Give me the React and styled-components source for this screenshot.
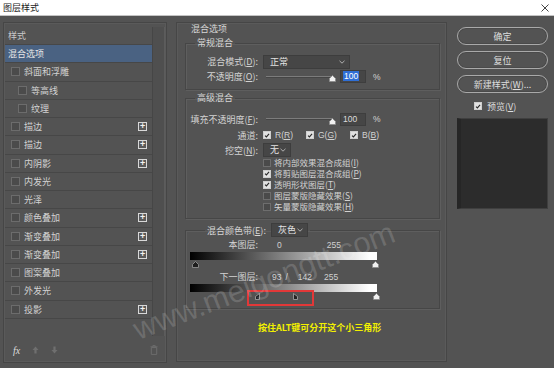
import React from "react";
import styled, { createGlobalStyle } from "styled-components";

const GlobalStyle = createGlobalStyle`
  html, body {
    margin: 0;
    padding: 0;
    background: #535353;
  }
  body {
    width: 554px;
    height: 368px;
    overflow: hidden;
    font-family: "Noto Sans CJK SC", "Liberation Sans", sans-serif;
  }
  u {
    text-decoration-thickness: 1px;
    text-underline-offset: 1px;
  }
`;

const leftItems = [
  { label: "斜面和浮雕" },
  { label: "等高线", sub: true },
  { label: "纹理", sub: true },
  { label: "描边", plus: true },
  { label: "描边", plus: true },
  { label: "内阴影", plus: true },
  { label: "内发光" },
  { label: "光泽" },
  { label: "颜色叠加", plus: true },
  { label: "渐变叠加", plus: true },
  { label: "渐变叠加", plus: true },
  { label: "图案叠加" },
  { label: "外发光" },
  { label: "投影", plus: true },
];

const checkList = [
  { label: "将内部效果混合成组", key: "I", on: false },
  { label: "将剪贴图层混合成组", key: "P", on: true },
  { label: "透明形状图层", key: "T", on: true },
  { label: "图层蒙版隐藏效果", key: "S", on: false },
  { label: "矢量蒙版隐藏效果", key: "H", on: false },
];

const Chevron = () => (
  <svg width="6" height="4" viewBox="0 0 6 4">
    <path d="M0.5 0.8 L3 3.2 L5.5 0.8" fill="none" stroke="#bbb" strokeWidth="0.9" />
  </svg>
);

const Thumb = ({ dark }) => (
  <svg width="7" height="7" viewBox="0 0 7 7">
    <path
      d="M3.5 0.5 L6.5 3.5 L6.5 6.5 L0.5 6.5 L0.5 3.5 Z"
      fill={dark ? "#1e1e1e" : "#f0f0f0"}
      stroke={dark ? "#9a9a9a" : "#8a8a8a"}
      strokeWidth="0.8"
    />
  </svg>
);

const HalfThumb = ({ flip }) => (
  <svg width="5" height="7" viewBox="0 0 5 7">
    <path
      d={flip ? "M0.5 0.5 L4.5 3.5 L4.5 6.5 L0.5 6.5 Z" : "M4.5 0.5 L0.5 3.5 L0.5 6.5 L4.5 6.5 Z"}
      fill="#222"
      stroke="#a8a8a8"
      strokeWidth="0.8"
    />
  </svg>
);

const Box = ({ on }) => (
  <CheckBox $on={on}>
    {on && (
      <svg width="7" height="7" viewBox="0 0 7 7">
        <path d="M1.2 3.6 L2.8 5.2 L5.9 1.6" fill="none" stroke="#2a2a2a" strokeWidth="1.3" />
      </svg>
    )}
  </CheckBox>
);

const Slider = () => (
  <SliderWrap>
    <Track />
    <Thumb />
  </SliderWrap>
);

export default function App() {
  return (
    <>
      <GlobalStyle />
      <Window>
        <TitleBar>
          <span>图层样式</span>
          <svg width="8" height="8" viewBox="0 0 8 8">
            <path d="M0.5 0.5 L7.5 7.5 M7.5 0.5 L0.5 7.5" stroke="#444" strokeWidth="1" />
          </svg>
        </TitleBar>
        <Body>
          <LeftPanel>
            <ListArea>
              <List>
                <ListHeader>样式</ListHeader>
                <ListItem $selected>混合选项</ListItem>
                {leftItems.map((item, index) => (
                  <ListItem key={`${index}leftItem`} $sub={item.sub}>
                    <ListCheck />
                    <ItemText>{item.label}</ItemText>
                    {item.plus && <PlusBox>+</PlusBox>}
                  </ListItem>
                ))}
              </List>
              <ScrollTrack />
            </ListArea>
            <Footer>
              <Fx>fx</Fx>
              <svg width="7" height="8" viewBox="0 0 7 8">
                <path d="M3.5 0.5 L6.5 4 L4.6 4 L4.6 7.5 L2.4 7.5 L2.4 4 L0.5 4 Z" fill="#6f6f6f" />
              </svg>
              <svg width="7" height="8" viewBox="0 0 7 8">
                <path d="M3.5 7.5 L6.5 4 L4.6 4 L4.6 0.5 L2.4 0.5 L2.4 4 L0.5 4 Z" fill="#6f6f6f" />
              </svg>
              <FooterSpacer />
              <svg width="8" height="10" viewBox="0 0 8 10">
                <path d="M0.5 1.8 H7.5 M2.8 1.8 V0.6 H5.2 V1.8 M1.3 2.6 H6.7 V9.4 H1.3 Z" fill="none" stroke="#6f6f6f" strokeWidth="0.9" />
              </svg>
            </Footer>
          </LeftPanel>

          <MidPanel>
            <PanelTitle>混合选项</PanelTitle>
            <Group $pt={5} $pb={5}>
              <Legend>常规混合</Legend>
              <FieldRow $h={15}>
                <Label>混合模式(<u>D</u>):</Label>
                <Select $w={87}>
                  <span>正常</span>
                  <Chevron />
                </Select>
              </FieldRow>
              <FieldRow $h={15}>
                <Label>不透明度(<u>O</u>):</Label>
                <Slider />
                <NumBox>
                  <Picked>100</Picked>
                </NumBox>
                <Pct>%</Pct>
              </FieldRow>
            </Group>

            <Group $pt={7} $pb={6} $mt={2}>
              <Legend>高级混合</Legend>
              <FieldRow $h={16}>
                <Label>填充不透明度(<u>F</u>):</Label>
                <Slider />
                <NumBox>100</NumBox>
                <Pct>%</Pct>
              </FieldRow>
              <FieldRow $h={16}>
                <Label>通道:</Label>
                <Channel $w={43}>
                  <Box on />
                  <span>R(<u>R</u>)</span>
                </Channel>
                <Channel $w={44}>
                  <Box on />
                  <span>G(<u>G</u>)</span>
                </Channel>
                <Channel>
                  <Box on />
                  <span>B(<u>B</u>)</span>
                </Channel>
              </FieldRow>
              <FieldRow $h={14}>
                <Label>挖空(<u>N</u>):</Label>
                <Select $w={28}>
                  <span>无</span>
                  <Chevron />
                </Select>
              </FieldRow>
              <CheckColumn>
                {checkList.map(item => (
                  <CheckLine key={item.key}>
                    <Box on={item.on} />
                    <span>
                      {item.label}(<u>{item.key}</u>)
                    </span>
                  </CheckLine>
                ))}
              </CheckColumn>
            </Group>

            <Group $pt={2} $pb={8} $mt={4} $pl={4}>
              <BandLegend>
                <span>混合颜色带(<u>E</u>):</span>
                <Select $w={37}>
                  <span>灰色</span>
                  <Chevron />
                </Select>
              </BandLegend>
              <LevelRow>
                <LevelLabel>本图层:</LevelLabel>
                <Num $ml={19}>0</Num>
                <Num $ml={45}>255</Num>
              </LevelRow>
              <GradientBar />
              <MarkerRow>
                <Marker $ml={2}>
                  <Thumb dark />
                </Marker>
                <Marker $ml={173}>
                  <Thumb />
                </Marker>
              </MarkerRow>
              <LevelRow $mt={3}>
                <LevelLabel>下一图层:</LevelLabel>
                <Num $ml={14}>93</Num>
                <Num $ml={4}>/</Num>
                <Num $ml={10}>142</Num>
                <Num $ml={12}>255</Num>
              </LevelRow>
              <GradientBar />
              <MarkerRow>
                <Marker $ml={65}>
                  <HalfThumb />
                </Marker>
                <Marker $ml={33}>
                  <HalfThumb flip />
                </Marker>
                <Marker $ml={75}>
                  <Thumb />
                </Marker>
                <RedFrame />
              </MarkerRow>
            </Group>

            <Hint>按住ALT键可分开这个小三角形</Hint>
          </MidPanel>

          <RightCol>
            <PillButton>确定</PillButton>
            <PillButton>复位</PillButton>
            <PillButton>
              新建样式(<u>W</u>)...
            </PillButton>
            <PreviewRow>
              <Box on />
              <span>
                预览(<u>V</u>)
              </span>
            </PreviewRow>
            <Swatch />
          </RightCol>
        </Body>
        <Watermark>www.meigongtt.com</Watermark>
      </Window>
    </>
  );
}

const Window = styled.div`
  position: relative;
  width: 554px;
  height: 368px;
  background: #535353;
  overflow: hidden;
  color: #d2d2d2;
  font-size: 9px;
`;

const TitleBar = styled.div`
  height: 15px;
  background: #ffffff;
  border-bottom: 1px solid #c4c4c4;
  display: flex;
  align-items: center;
  justify-content: space-between;
  padding: 0 5px 0 3px;
  color: #1a1a1a;
  font-size: 9px;
  line-height: 15px;
`;

const Body = styled.div`
  display: flex;
  align-items: flex-start;
  padding: 6px 0 0 3px;
`;

const LeftPanel = styled.div`
  width: 164px;
  height: 341px;
  box-sizing: border-box;
  border: 1px solid #464646;
  box-shadow: inset 0 0 0 1px #5a5a5a;
  padding: 4px 1px 0 1px;
  display: flex;
  flex-direction: column;
`;

const ListArea = styled.div`
  flex: 1;
  display: flex;
`;

const List = styled.div`
  width: 148px;
  display: flex;
  flex-direction: column;
`;

const ScrollTrack = styled.div`
  width: 11px;
  margin-bottom: 4px;
  background: #4f4f4f;
  border-left: 1px solid #464646;
  border-right: 1px solid #5c5c5c;
`;

const ListHeader = styled.div`
  height: 18px;
  box-sizing: border-box;
  padding-left: 3px;
  line-height: 17px;
  color: #c8c8c8;
  border-bottom: 1px solid #474747;
`;

const ListItem = styled.div`
  height: 18.25px;
  box-sizing: border-box;
  display: flex;
  align-items: center;
  padding-left: ${({ $sub, $selected }) => ($selected ? 3 : $sub ? 13 : 6)}px;
  padding-right: 5px;
  background: ${({ $selected }) => ($selected ? "#4a6282" : "#535353")};
  border-bottom: 1px solid #474747;
  color: ${({ $selected }) => ($selected ? "#e6e6e6" : "#d2d2d2")};
`;

const ListCheck = styled.span`
  width: 7px;
  height: 7px;
  border: 1px solid #6c6c6c;
  background: #4b4b4b;
  flex-shrink: 0;
`;

const ItemText = styled.span`
  margin-left: 4px;
  flex: 1;
`;

const PlusBox = styled.span`
  width: 7px;
  height: 7px;
  border: 1px solid #d8d8d8;
  background: #5a5a5a;
  color: #f2f2f2;
  font-family: "Liberation Sans", sans-serif;
  font-size: 9px;
  font-weight: 700;
  line-height: 7px;
  text-align: center;
`;

const Footer = styled.div`
  height: 20px;
  display: flex;
  align-items: center;
  gap: 12px;
  padding: 0 7px 2px 8px;
`;

const Fx = styled.span`
  font-family: "Liberation Serif", serif;
  font-style: italic;
  font-size: 10px;
  color: #dcdcdc;
`;

const FooterSpacer = styled.span`
  flex: 1;
`;

const MidPanel = styled.div`
  width: 271px;
  height: 340px;
  margin-left: 9px;
  box-sizing: border-box;
  border: 1px solid #464646;
  box-shadow: inset 0 0 0 1px #5a5a5a;
  padding: 0 6px 0 8px;
`;

const PanelTitle = styled.div`
  height: 10px;
  line-height: 10px;
  margin-top: 1px;
  padding-left: 6px;
  color: #d6d6d6;
`;

const Group = styled.fieldset`
  margin: ${({ $mt }) => $mt ?? 3}px 0 0;
  padding: ${({ $pt }) => $pt}px 0 ${({ $pb }) => $pb}px ${({ $pl }) => $pl ?? 0}px;
  border: 1px solid #464646;
  box-shadow: 1px 1px 0 #5e5e5e, inset 1px 1px 0 #5e5e5e;
  min-width: 0;
`;

const Legend = styled.legend`
  margin-left: 9px;
  padding: 0 2px;
  height: 12px;
  line-height: 12px;
  color: #d6d6d6;
`;

const BandLegend = styled.legend`
  margin-left: 15px;
  padding: 0 2px;
  height: 14px;
  display: flex;
  align-items: center;
  gap: 5px;
  color: #d6d6d6;
  white-space: nowrap;
`;

const FieldRow = styled.div`
  height: ${({ $h }) => $h}px;
  display: flex;
  align-items: center;
`;

const Label = styled.span`
  width: 72px;
  margin-right: 5px;
  flex-shrink: 0;
  text-align: right;
  white-space: nowrap;
`;

const Select = styled.div`
  width: ${({ $w }) => $w}px;
  height: 14px;
  box-sizing: border-box;
  flex-shrink: 0;
  display: flex;
  align-items: center;
  justify-content: space-between;
  padding: 0 4px 0 6px;
  background: #464646;
  border: 1px solid #3d3d3d;
  color: #e2e2e2;
  line-height: 12px;
  white-space: nowrap;
`;

const SliderWrap = styled.div`
  width: 70px;
  margin-left: 3px;
  display: flex;
  align-items: center;
  svg {
    margin-left: -4px;
    margin-top: 4px;
  }
`;

const Track = styled.div`
  flex: 1;
  height: 1px;
  background: #7c7c7c;
  border-bottom: 1px solid #454545;
`;

const NumBox = styled.div`
  width: 26px;
  height: 13px;
  box-sizing: border-box;
  margin-left: 4px;
  padding-left: 2px;
  background: #464646;
  border: 1px solid #3e3e3e;
  font-family: "Liberation Sans", sans-serif;
  font-size: 8.5px;
  line-height: 11px;
  color: #dcdcdc;
`;

const Picked = styled.span`
  background: #2f6fd6;
  color: #ffffff;
  padding: 0 1px;
`;

const Pct = styled.span`
  margin-left: 7px;
  font-family: "Liberation Sans", sans-serif;
  font-size: 8.5px;
`;

const Channel = styled.span`
  width: ${({ $w }) => ($w ? `${$w}px` : "auto")};
  display: flex;
  align-items: center;
  gap: 4px;
  font-family: "Liberation Sans", sans-serif;
  font-size: 8.5px;
  line-height: 11px;
`;

const CheckBox = styled.span`
  width: 8px;
  height: 8px;
  box-sizing: border-box;
  flex-shrink: 0;
  display: flex;
  align-items: center;
  justify-content: center;
  background: ${({ $on }) => ($on ? "#e2e2e2" : "#4a4a4a")};
  border: 1px solid ${({ $on }) => ($on ? "#cfcfcf" : "#6e6e6e")};
`;

const CheckColumn = styled.div`
  margin-left: 77px;
  display: flex;
  flex-direction: column;
`;

const CheckLine = styled.div`
  height: 11px;
  line-height: 11px;
  font-size: 8.5px;
  display: flex;
  align-items: center;
  gap: 3px;
  white-space: nowrap;
`;

const LevelRow = styled.div`
  height: 12px;
  line-height: 12px;
  margin-top: ${({ $mt }) => $mt ?? 0}px;
  display: flex;
  align-items: center;
`;

const LevelLabel = styled.span`
  width: 68px;
  text-align: right;
  flex-shrink: 0;
`;

const Num = styled.span`
  margin-left: ${({ $ml }) => $ml}px;
  font-family: "Liberation Sans", sans-serif;
  font-size: 8.5px;
  color: #d0d0d0;
`;

const GradientBar = styled.div`
  width: 187px;
  height: 8px;
  margin-top: 1px;
  background: linear-gradient(to right, #000000 0%, #ffffff 96%, #ffffff 100%);
`;

const MarkerRow = styled.div`
  position: relative;
  height: 8px;
  padding-top: 1px;
  box-sizing: border-box;
  display: flex;
  align-items: flex-start;
`;

const Marker = styled.span`
  margin-left: ${({ $ml }) => $ml}px;
  display: flex;
`;

const RedFrame = styled.span`
  position: absolute;
  left: 57px;
  top: -2px;
  width: 67px;
  height: 16px;
  box-sizing: border-box;
  border: 2px solid #e23838;
`;

const Hint = styled.div`
  margin-top: 13px;
  padding-left: 73px;
  height: 12px;
  line-height: 12px;
  color: #f2f000;
  font-size: 9px;
  font-weight: 700;
  white-space: nowrap;
`;

const RightCol = styled.div`
  width: 91px;
  margin-left: 10px;
  margin-top: 5px;
  display: flex;
  flex-direction: column;
`;

const PillButton = styled.div`
  height: 18px;
  margin-bottom: 6px;
  box-sizing: border-box;
  border: 1px solid #a9a9a9;
  border-radius: 9px;
  box-shadow: inset 0 0 0 1px #4a4a4a;
  display: flex;
  align-items: center;
  justify-content: center;
  color: #dedede;
`;

const PreviewRow = styled.div`
  height: 14px;
  margin-left: 17px;
  display: flex;
  align-items: center;
  gap: 5px;
  color: #dedede;
`;

const Swatch = styled.div`
  height: 91px;
  margin-top: 5px;
  box-sizing: border-box;
  background: #2c2c2c;
  border: 1px solid #3f3f3f;
  border-left: 4px solid #262626;
`;

const Watermark = styled.div`
  position: absolute;
  left: 140px;
  top: 314px;
  font-family: "Liberation Sans", sans-serif;
  font-size: 31px;
  line-height: 31px;
  color: rgba(255, 255, 255, 0.16);
  white-space: nowrap;
  transform: rotate(-21deg);
  transform-origin: 0 100%;
  pointer-events: none;
`;
